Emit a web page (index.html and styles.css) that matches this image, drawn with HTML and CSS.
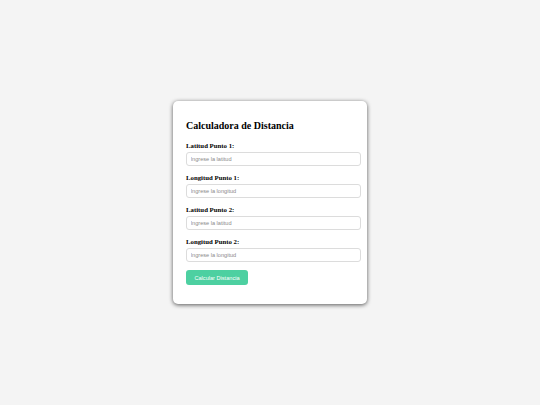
FILE: index.html
```html
<!DOCTYPE html>
<html lang="es">
<head>
<meta charset="utf-8">
<title>Calculadora de Distancia</title>
<link rel="stylesheet" href="styles.css">
</head>
<body>
<div class="card">
  <h2 class="title">Calculadora de Distancia</h2>
  <label class="label" for="lat1">Latitud Punto 1:</label>
  <input class="field" id="lat1" type="text" placeholder="Ingrese la latitud">
  <label class="label" for="lon1">Longitud Punto 1:</label>
  <input class="field" id="lon1" type="text" placeholder="Ingrese la longitud">
  <label class="label" for="lat2">Latitud Punto 2:</label>
  <input class="field" id="lat2" type="text" placeholder="Ingrese la latitud">
  <label class="label" for="lon2">Longitud Punto 2:</label>
  <input class="field" id="lon2" type="text" placeholder="Ingrese la longitud">
  <button class="btn" type="button">Calcular Distancia</button>
</div>
</body>
</html>
```
FILE: styles.css
```css
html, body {
  margin: 0;
  padding: 0;
}
body {
  background: #f4f4f4;
  height: 405px;
  display: flex;
  align-items: center;
  justify-content: center;
  font-family: "Liberation Serif", "Times New Roman", serif;
}
.card {
  width: 194px;
  box-sizing: border-box;
  background: #ffffff;
  border-radius: 5px;
  box-shadow: 0 1px 4px rgba(0, 0, 0, 0.65);
  padding: 19px 6px 19px 13px;
  display: flex;
  flex-direction: column;
  align-items: flex-start;
}
.title {
  margin: 0 0 10px 0;
  font-size: 10px;
  line-height: 12px;
  font-weight: bold;
  color: #000;
}
.label {
  display: block;
  font-size: 6.8px;
  line-height: 8px;
  font-weight: bold;
  color: #000;
  margin-bottom: 1.5px;
}
.field {
  display: block;
  box-sizing: border-box;
  width: 175px;
  height: 14px;
  margin: 0 0 8.5px 0;
  padding: 0 3.5px;
  border: 1px solid #dcdcdc;
  border-radius: 3px;
  background: #fff;
  font-family: "Liberation Sans", Arial, sans-serif;
  font-size: 5.6px;
  color: #333;
  outline: none;
}
.field::placeholder {
  color: #8a8a8a;
}
.btn {
  display: block;
  box-sizing: border-box;
  width: 62px;
  height: 15px;
  margin: 0;
  padding: 0;
  border: none;
  border-radius: 3px;
  background: #4dd0a1;
  color: #ffffff;
  font-family: "Liberation Sans", Arial, sans-serif;
  font-size: 5.6px;
  cursor: pointer;
}
```
